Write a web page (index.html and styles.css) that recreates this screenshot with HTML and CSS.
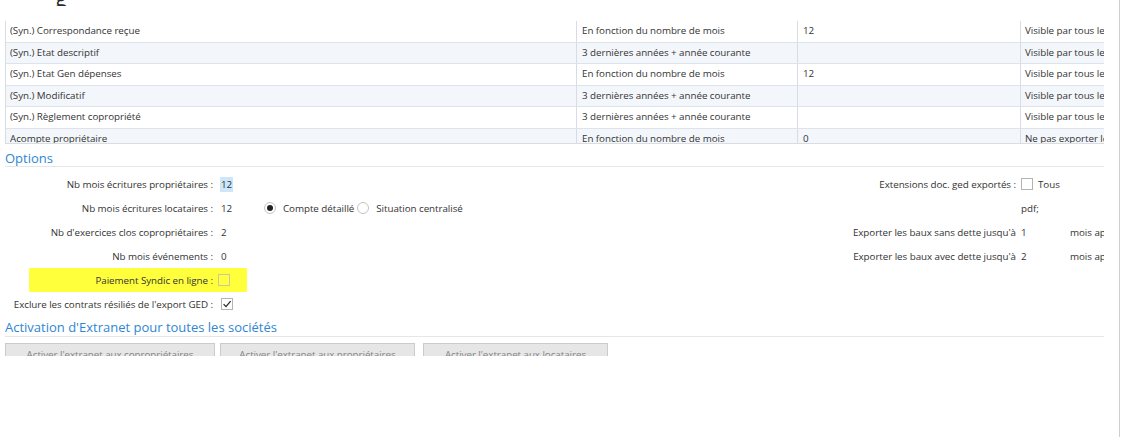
FILE: index.html
```html
<!DOCTYPE html>
<html lang="fr">
<head>
<meta charset="utf-8">
<title>Options</title>
<link rel="stylesheet" href="styles.css">
</head>
<body>
<div class="page">
  <div class="content">
    <div class="top"><div class="title"><span>g</span></div></div>

    <div class="grid">
      <div class="row"><div class="c c1">(Syn.) Correspondance reçue</div><div class="c c2">En fonction du nombre de mois</div><div class="c c3">12</div><div class="c c4">Visible par tous les intervenants</div></div>
      <div class="row alt"><div class="c c1">(Syn.) Etat descriptif</div><div class="c c2">3 dernières années + année courante</div><div class="c c3"></div><div class="c c4">Visible par tous les intervenants</div></div>
      <div class="row"><div class="c c1">(Syn.) Etat Gen dépenses</div><div class="c c2">En fonction du nombre de mois</div><div class="c c3">12</div><div class="c c4">Visible par tous les intervenants</div></div>
      <div class="row alt"><div class="c c1">(Syn.) Modificatif</div><div class="c c2">3 dernières années + année courante</div><div class="c c3"></div><div class="c c4">Visible par tous les intervenants</div></div>
      <div class="row"><div class="c c1">(Syn.) Règlement copropriété</div><div class="c c2">3 dernières années + année courante</div><div class="c c3"></div><div class="c c4">Visible par tous les intervenants</div></div>
      <div class="row alt"><div class="c c1">Acompte propriétaire</div><div class="c c2">En fonction du nombre de mois</div><div class="c c3">0</div><div class="c c4">Ne pas exporter le document</div></div>
    </div>

    <h2 class="section">Options</h2>

    <div class="form">
      <div class="fleft">
        <div class="frow"><div class="flabel">Nb mois écritures propriétaires :</div><div class="fval"><span class="sel">12</span></div></div>
        <div class="frow"><div class="flabel">Nb mois écritures locataires :</div><div class="fval w43">12</div>
          <span class="radio on"></span><span class="rlabel">Compte détaillé</span>
          <span class="radio"></span><span class="rlabel">Situation centralisé</span>
        </div>
        <div class="frow"><div class="flabel">Nb d'exercices clos copropriétaires :</div><div class="fval">2</div></div>
        <div class="frow"><div class="flabel">Nb mois événements :</div><div class="fval">0</div></div>
        <div class="frow hl"><div class="flabel">Paiement Syndic en ligne :</div><div class="fval"><span class="cb"></span></div></div>
        <div class="frow"><div class="flabel">Exclure les contrats résiliés de l'export GED :</div><div class="fval"><span class="cb"><svg viewBox="0 0 12 12" width="12" height="12"><path d="M2.6 6.2 L5 8.6 L9.6 3.2" fill="none" stroke="#222" stroke-width="1.2"/></svg></span></div></div>
      </div>
      <div class="fright">
        <div class="rlab">Extensions doc. ged exportés :</div><div class="rval"><span class="cb"></span><span class="tous">Tous</span></div><div class="rsuf"></div>
        <div class="rlab"></div><div class="rval">pdf;</div><div class="rsuf"></div>
        <div class="rlab">Exporter les baux sans dette jusqu'à</div><div class="rval">1</div><div class="rsuf">mois après</div>
        <div class="rlab">Exporter les baux avec dette jusqu'à</div><div class="rval">2</div><div class="rsuf">mois après</div>
      </div>
    </div>

    <h2 class="section s2">Activation d'Extranet pour toutes les sociétés</h2>

    <div class="btnclip">
      <button class="btn b1" disabled>Activer l'extranet aux copropriétaires</button>
      <button class="btn b2" disabled>Activer l'extranet aux propriétaires</button>
      <button class="btn b3" disabled>Activer l'extranet aux locataires</button>
    </div>
  </div>
</div>
</body>
</html>
```
FILE: styles.css
```css
* { box-sizing: border-box; }
html, body { margin: 0; padding: 0; background: #fff; }
body {
  font-family: "Open Sans", "Noto Sans", "Liberation Sans", sans-serif;
  font-size: 9.8px;
  letter-spacing: -0.05px;
  color: #333;
}
.page {
  width: 1120px;
  height: 437px;
  border-right: 1px solid #cfcfcf;
}
.content {
  margin-left: 5px;
  width: 1099px;
  height: 437px;
  overflow: hidden;
}
.top { height: 21px; }
.title {
  height: 6px;
  overflow: hidden;
}
.title span {
  display: block;
  margin-top: -14px;
  padding-left: 50px;
  font-size: 22px;
  line-height: 22px;
  color: #2b2b2b;
}

/* grid */
.grid {
  height: 123px;
  overflow: hidden;
  border-left: 1px solid #d8dde3;
  border-bottom: 1px solid #d8dde3;
}
.row {
  display: grid;
  grid-template-columns: 570px 221px 223px 120px;
  height: 21.5px;
  border-bottom: 1px solid #dde3ea;
  background: #fff;
}
.row.alt { background: #f3f7fb; }
.c {
  padding-left: 4px;
  line-height: 20px;
  white-space: nowrap;
  overflow: hidden;
}
.c2, .c3, .c4 { border-left: 1px solid #d6dde6; padding-left: 5px; }
.c4 { padding-left: 4px; }

/* section headings */
.section {
  margin: 0;
  height: 23px;
  border-bottom: 1px solid #e4e6e9;
  color: #2f86d2;
  font-weight: normal;
  font-size: 13px;
  letter-spacing: 0;
  line-height: 28px;
}
.section.s2 { height: 21px; line-height: 22px; }

/* form */
.form {
  display: flex;
  padding-top: 5px;
  height: 149px;
}
.fleft { width: 800px; flex: none; }
.frow {
  display: flex;
  align-items: center;
  height: 24px;
}
.flabel {
  width: 208px;
  flex: none;
  text-align: right;
  white-space: nowrap;
}
.fval { margin-left: 8px; display: flex; align-items: center; }
.fval.w43 { width: 43px; }
.sel { background: #cde6f9; padding: 1px 1px; margin-left: -1px; }
.frow.hl {
  background: #ffff3c;
  margin-left: 24px;
  width: 218px;
}
.frow.hl .flabel { width: 184px; }
.frow.hl .fval { margin-left: 5px; }
.cb {
  display: inline-flex;
  width: 12px;
  height: 12px;
  border: 1px solid #b3b3b3;
  background: #fff;
}
.cb svg { margin: -1px; }
.frow.hl .cb { background: transparent; border-color: #c8c8a0; }
.radio {
  width: 12px;
  height: 12px;
  border: 1px solid #c4c4c4;
  border-radius: 50%;
  background: #fff;
  flex: none;
  position: relative;
}
.radio.on::after {
  content: "";
  position: absolute;
  left: 2px; top: 2px;
  width: 6px; height: 6px;
  border-radius: 50%;
  background: #222;
}
.rlabel { margin-left: 7px; margin-right: 3px; white-space: nowrap; }

.fright {
  flex: none;
  display: grid;
  grid-template-columns: 213px 52px 80px;
  grid-auto-rows: 24px;
  align-items: center;
}
.rlab { text-align: right; white-space: nowrap; padding-right: 2px; }
.rval { display: flex; align-items: center; white-space: nowrap; padding-left: 3px; }
.rsuf { white-space: nowrap; }
.tous { margin-left: 5px; }

/* buttons */
.btnclip {
  margin-top: 6px;
  height: 13px;
  overflow: hidden;
  display: flex;
}
.btn {
  flex: none;
  height: 22px;
  padding: 2px 0 0;
  border: 1px solid #cbcbcb;
  background: #e6e6e6;
  color: #838383;
  font-family: inherit;
  font-size: 9.8px;
  letter-spacing: -0.05px;
  line-height: 14px;
  text-align: center;
}
.b1 { width: 210px; }
.b2 { width: 195px; margin-left: 5px; }
.b3 { width: 185px; margin-left: 8px; }
```
